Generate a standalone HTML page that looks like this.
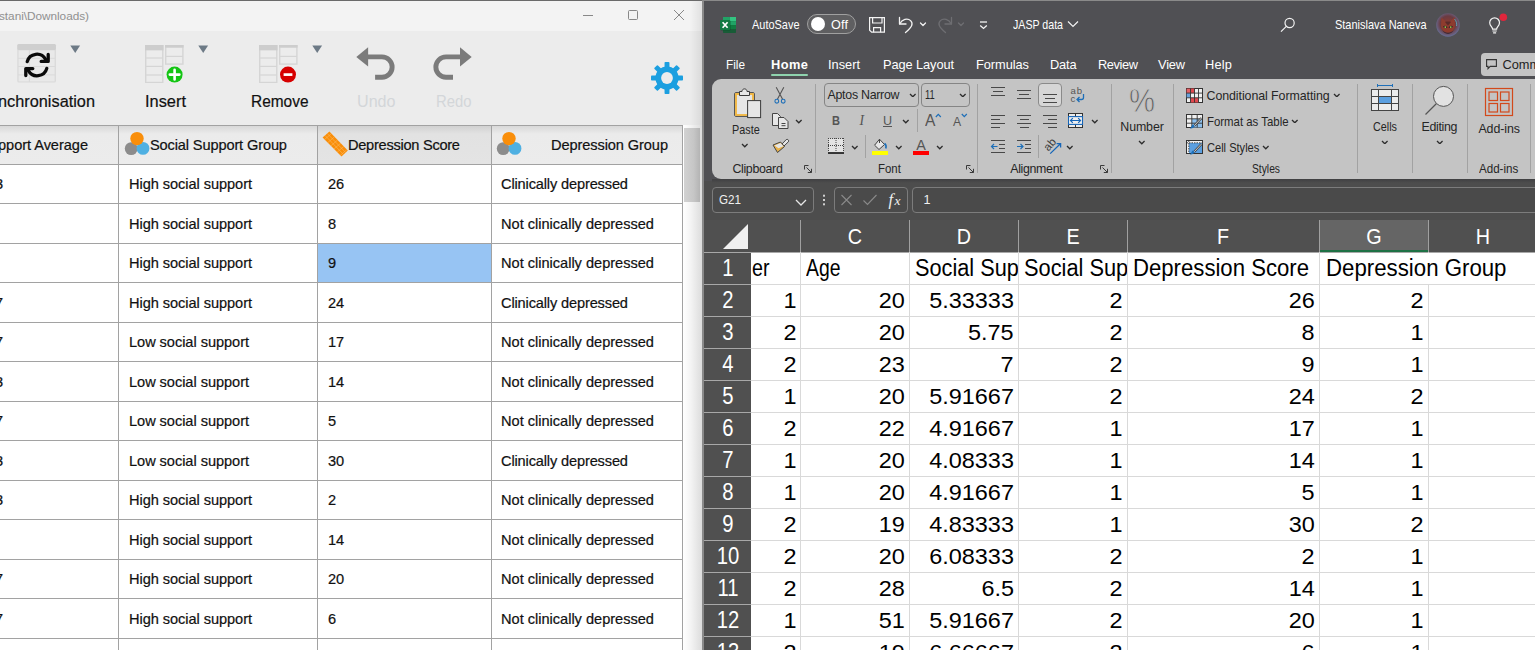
<!DOCTYPE html>
<html lang="en"><head><meta charset="utf-8"><title>JASP data</title>
<style>
html,body{margin:0;padding:0;}
body{width:1535px;height:650px;overflow:hidden;position:relative;background:#505054;font-family:"Liberation Sans",sans-serif;}
div,span.t,svg{position:absolute;}
span.t{white-space:pre;transform-origin:0 0;}
div{box-sizing:border-box;}
</style></head>
<body>
<div style="left:0px;top:0px;width:704px;height:650px;background:#f3f3f3;"></div>
<div style="left:0px;top:0px;width:704px;height:1px;background:#6a6a6a;"></div>
<div style="left:0px;top:1px;width:702px;height:30px;background:#f3f3f3;"></div>
<span class="t" style="left:-1px;top:9px;font-size:11.8px;line-height:14px;color:#909090;letter-spacing:-0.033px;">stani\Downloads)</span>
<svg style="left:578px;top:5px" width="112" height="20" viewBox="0 0 112 20"><g fill="none" stroke="#7c7c7c" stroke-width="0.9"><path d="M5 10.5H15"/><rect x="50.5" y="5.5" width="9" height="9" rx="1"/><path d="M96 5L106 15M106 5L96 15"/></g></svg>
<div style="left:0px;top:31px;width:702px;height:94px;background:#ececec;"></div>
<div style="left:0px;top:125px;width:684px;height:39px;background:linear-gradient(#d6d6d6,#ebebeb 9px,#ececec);"></div>
<div style="left:318px;top:125px;width:173px;height:39px;background:linear-gradient(#cfcfcf,#e2e2e2 9px,#e4e4e4);"></div>
<div style="left:0px;top:164px;width:684px;height:486px;background:#ffffff;"></div>
<div style="left:318px;top:244px;width:173px;height:38px;background:#97c4f3;"></div>
<div style="left:0px;top:125px;width:683px;height:1px;background:#a2a2a2;"></div>
<div style="left:0px;top:164px;width:683px;height:1px;background:#a2a2a2;"></div>
<div style="left:0px;top:203px;width:683px;height:1px;background:#a2a2a2;"></div>
<div style="left:0px;top:243px;width:683px;height:1px;background:#a2a2a2;"></div>
<div style="left:0px;top:282px;width:683px;height:1px;background:#a2a2a2;"></div>
<div style="left:0px;top:322px;width:683px;height:1px;background:#a2a2a2;"></div>
<div style="left:0px;top:361px;width:683px;height:1px;background:#a2a2a2;"></div>
<div style="left:0px;top:401px;width:683px;height:1px;background:#a2a2a2;"></div>
<div style="left:0px;top:440px;width:683px;height:1px;background:#a2a2a2;"></div>
<div style="left:0px;top:480px;width:683px;height:1px;background:#a2a2a2;"></div>
<div style="left:0px;top:519px;width:683px;height:1px;background:#a2a2a2;"></div>
<div style="left:0px;top:559px;width:683px;height:1px;background:#a2a2a2;"></div>
<div style="left:0px;top:598px;width:683px;height:1px;background:#a2a2a2;"></div>
<div style="left:0px;top:638px;width:683px;height:1px;background:#a2a2a2;"></div>
<div style="left:118px;top:125px;width:1px;height:525px;background:#a2a2a2;"></div>
<div style="left:317px;top:125px;width:1px;height:525px;background:#a2a2a2;"></div>
<div style="left:491px;top:125px;width:1px;height:525px;background:#a2a2a2;"></div>
<div style="left:682px;top:125px;width:1px;height:525px;background:#a2a2a2;"></div>
<div style="left:683px;top:125px;width:19px;height:525px;background:linear-gradient(90deg,#ffffff,#f4f4f4 40%,#dcdcdc);"></div>
<div style="left:684px;top:128px;width:16px;height:74px;background:linear-gradient(90deg,#d2d2d2,#c6c6c6 60%,#b4b4b4);"></div>
<div style="left:690px;top:1px;width:12px;height:124px;background:linear-gradient(90deg,rgba(0,0,0,0),rgba(0,0,0,0.08));"></div>
<div style="left:702px;top:0px;width:2px;height:650px;background:#8a8a8a;"></div>
<span class="t" style="left:-2px;top:91px;font-size:17.4px;line-height:20px;color:#111;transform:scaleX(0.9376);-webkit-text-stroke:0.2px #111;">nchronisation</span>
<span class="t" style="left:145px;top:91px;font-size:17.4px;line-height:20px;color:#111;transform:scaleX(0.9425);-webkit-text-stroke:0.2px #111;">Insert</span>
<span class="t" style="left:250.5px;top:91px;font-size:17.4px;line-height:20px;color:#111;transform:scaleX(0.8878);-webkit-text-stroke:0.2px #111;">Remove</span>
<span class="t" style="left:356.5px;top:91px;font-size:17.4px;line-height:20px;color:#d3d6d9;transform:scaleX(0.9260);">Undo</span>
<span class="t" style="left:435.5px;top:91px;font-size:17.4px;line-height:20px;color:#d3d6d9;transform:scaleX(0.8538);">Redo</span>
<span class="t" style="left:-2px;top:137px;font-size:14.6px;line-height:16px;color:#111;letter-spacing:-0.051px;-webkit-text-stroke:0.2px #111;">pport Average</span>
<span class="t" style="left:150px;top:137px;font-size:14.6px;line-height:16px;color:#111;letter-spacing:-0.134px;-webkit-text-stroke:0.2px #111;">Social Support Group</span>
<span class="t" style="left:348px;top:137px;font-size:14.6px;line-height:16px;color:#111;letter-spacing:-0.267px;-webkit-text-stroke:0.2px #111;">Depression Score</span>
<span class="t" style="left:551px;top:137px;font-size:14.6px;line-height:16px;color:#111;letter-spacing:-0.096px;-webkit-text-stroke:0.2px #111;">Depression Group</span>
<span class="t" style="left:129px;top:176px;font-size:14.6px;line-height:16px;color:#111;letter-spacing:-0.062px;-webkit-text-stroke:0.2px #111;">High social support</span>
<span class="t" style="left:328px;top:176px;font-size:14.6px;line-height:16px;color:#111;-webkit-text-stroke:0.2px #111;">26</span>
<span class="t" style="left:501px;top:176px;font-size:14.6px;line-height:16px;color:#111;letter-spacing:-0.147px;-webkit-text-stroke:0.2px #111;">Clinically depressed</span>
<span class="t" style="left:-5px;top:176px;font-size:14.6px;line-height:16px;color:#111;-webkit-text-stroke:0.2px #111;">3</span>
<span class="t" style="left:129px;top:216px;font-size:14.6px;line-height:16px;color:#111;letter-spacing:-0.062px;-webkit-text-stroke:0.2px #111;">High social support</span>
<span class="t" style="left:328px;top:216px;font-size:14.6px;line-height:16px;color:#111;-webkit-text-stroke:0.2px #111;">8</span>
<span class="t" style="left:501px;top:216px;font-size:14.6px;line-height:16px;color:#111;letter-spacing:-0.014px;-webkit-text-stroke:0.2px #111;">Not clinically depressed</span>
<span class="t" style="left:129px;top:255px;font-size:14.6px;line-height:16px;color:#111;letter-spacing:-0.062px;-webkit-text-stroke:0.2px #111;">High social support</span>
<span class="t" style="left:328px;top:255px;font-size:14.6px;line-height:16px;color:#111;-webkit-text-stroke:0.2px #111;">9</span>
<span class="t" style="left:501px;top:255px;font-size:14.6px;line-height:16px;color:#111;letter-spacing:-0.014px;-webkit-text-stroke:0.2px #111;">Not clinically depressed</span>
<span class="t" style="left:129px;top:295px;font-size:14.6px;line-height:16px;color:#111;letter-spacing:-0.062px;-webkit-text-stroke:0.2px #111;">High social support</span>
<span class="t" style="left:328px;top:295px;font-size:14.6px;line-height:16px;color:#111;-webkit-text-stroke:0.2px #111;">24</span>
<span class="t" style="left:501px;top:295px;font-size:14.6px;line-height:16px;color:#111;letter-spacing:-0.147px;-webkit-text-stroke:0.2px #111;">Clinically depressed</span>
<span class="t" style="left:-5px;top:295px;font-size:14.6px;line-height:16px;color:#111;-webkit-text-stroke:0.2px #111;">7</span>
<span class="t" style="left:129px;top:334px;font-size:14.6px;line-height:16px;color:#111;letter-spacing:-0.051px;-webkit-text-stroke:0.2px #111;">Low social support</span>
<span class="t" style="left:328px;top:334px;font-size:14.6px;line-height:16px;color:#111;-webkit-text-stroke:0.2px #111;">17</span>
<span class="t" style="left:501px;top:334px;font-size:14.6px;line-height:16px;color:#111;letter-spacing:-0.014px;-webkit-text-stroke:0.2px #111;">Not clinically depressed</span>
<span class="t" style="left:-5px;top:334px;font-size:14.6px;line-height:16px;color:#111;-webkit-text-stroke:0.2px #111;">7</span>
<span class="t" style="left:129px;top:374px;font-size:14.6px;line-height:16px;color:#111;letter-spacing:-0.051px;-webkit-text-stroke:0.2px #111;">Low social support</span>
<span class="t" style="left:328px;top:374px;font-size:14.6px;line-height:16px;color:#111;-webkit-text-stroke:0.2px #111;">14</span>
<span class="t" style="left:501px;top:374px;font-size:14.6px;line-height:16px;color:#111;letter-spacing:-0.014px;-webkit-text-stroke:0.2px #111;">Not clinically depressed</span>
<span class="t" style="left:-5px;top:374px;font-size:14.6px;line-height:16px;color:#111;-webkit-text-stroke:0.2px #111;">3</span>
<span class="t" style="left:129px;top:413px;font-size:14.6px;line-height:16px;color:#111;letter-spacing:-0.051px;-webkit-text-stroke:0.2px #111;">Low social support</span>
<span class="t" style="left:328px;top:413px;font-size:14.6px;line-height:16px;color:#111;-webkit-text-stroke:0.2px #111;">5</span>
<span class="t" style="left:501px;top:413px;font-size:14.6px;line-height:16px;color:#111;letter-spacing:-0.014px;-webkit-text-stroke:0.2px #111;">Not clinically depressed</span>
<span class="t" style="left:-5px;top:413px;font-size:14.6px;line-height:16px;color:#111;-webkit-text-stroke:0.2px #111;">7</span>
<span class="t" style="left:129px;top:453px;font-size:14.6px;line-height:16px;color:#111;letter-spacing:-0.051px;-webkit-text-stroke:0.2px #111;">Low social support</span>
<span class="t" style="left:328px;top:453px;font-size:14.6px;line-height:16px;color:#111;-webkit-text-stroke:0.2px #111;">30</span>
<span class="t" style="left:501px;top:453px;font-size:14.6px;line-height:16px;color:#111;letter-spacing:-0.147px;-webkit-text-stroke:0.2px #111;">Clinically depressed</span>
<span class="t" style="left:-5px;top:453px;font-size:14.6px;line-height:16px;color:#111;-webkit-text-stroke:0.2px #111;">3</span>
<span class="t" style="left:129px;top:492px;font-size:14.6px;line-height:16px;color:#111;letter-spacing:-0.062px;-webkit-text-stroke:0.2px #111;">High social support</span>
<span class="t" style="left:328px;top:492px;font-size:14.6px;line-height:16px;color:#111;-webkit-text-stroke:0.2px #111;">2</span>
<span class="t" style="left:501px;top:492px;font-size:14.6px;line-height:16px;color:#111;letter-spacing:-0.014px;-webkit-text-stroke:0.2px #111;">Not clinically depressed</span>
<span class="t" style="left:-5px;top:492px;font-size:14.6px;line-height:16px;color:#111;-webkit-text-stroke:0.2px #111;">3</span>
<span class="t" style="left:129px;top:532px;font-size:14.6px;line-height:16px;color:#111;letter-spacing:-0.062px;-webkit-text-stroke:0.2px #111;">High social support</span>
<span class="t" style="left:328px;top:532px;font-size:14.6px;line-height:16px;color:#111;-webkit-text-stroke:0.2px #111;">14</span>
<span class="t" style="left:501px;top:532px;font-size:14.6px;line-height:16px;color:#111;letter-spacing:-0.014px;-webkit-text-stroke:0.2px #111;">Not clinically depressed</span>
<span class="t" style="left:129px;top:571px;font-size:14.6px;line-height:16px;color:#111;letter-spacing:-0.062px;-webkit-text-stroke:0.2px #111;">High social support</span>
<span class="t" style="left:328px;top:571px;font-size:14.6px;line-height:16px;color:#111;-webkit-text-stroke:0.2px #111;">20</span>
<span class="t" style="left:501px;top:571px;font-size:14.6px;line-height:16px;color:#111;letter-spacing:-0.014px;-webkit-text-stroke:0.2px #111;">Not clinically depressed</span>
<span class="t" style="left:-5px;top:571px;font-size:14.6px;line-height:16px;color:#111;-webkit-text-stroke:0.2px #111;">7</span>
<span class="t" style="left:129px;top:611px;font-size:14.6px;line-height:16px;color:#111;letter-spacing:-0.062px;-webkit-text-stroke:0.2px #111;">High social support</span>
<span class="t" style="left:328px;top:611px;font-size:14.6px;line-height:16px;color:#111;-webkit-text-stroke:0.2px #111;">6</span>
<span class="t" style="left:501px;top:611px;font-size:14.6px;line-height:16px;color:#111;letter-spacing:-0.014px;-webkit-text-stroke:0.2px #111;">Not clinically depressed</span>
<span class="t" style="left:-5px;top:611px;font-size:14.6px;line-height:16px;color:#111;-webkit-text-stroke:0.2px #111;">7</span>
<div style="left:704px;top:0px;width:831px;height:220px;background:#505054;"></div>
<div style="left:704px;top:0px;width:831px;height:1px;background:#8a8a8a;"></div>
<div style="left:712px;top:79px;width:830px;height:100px;background:#c4c4c4;border-radius:0 0 0 9px;border-top-left-radius:9px;"></div>
<div style="left:704px;top:181px;width:831px;height:39px;background:#4d4d4d;"></div>
<div style="left:712px;top:179px;width:823px;height:4px;background:linear-gradient(#404042,#4d4d4d);"></div>
<div style="left:712px;top:187px;width:102px;height:26px;background:#4a4a4a;border:1px solid #7c7c7c;border-radius:4px;"></div>
<div style="left:834px;top:187px;width:74px;height:26px;background:#4a4a4a;border:1px solid #7c7c7c;border-radius:4px;"></div>
<div style="left:912px;top:187px;width:640px;height:26px;background:#4a4a4a;border:1px solid #7c7c7c;border-radius:4px;"></div>
<div style="left:704px;top:220px;width:831px;height:32px;background:#505050;"></div>
<div style="left:1319px;top:220px;width:109px;height:32px;background:#656565;"></div>
<div style="left:1319px;top:250px;width:109px;height:2px;background:#1e7145;"></div>
<div style="left:704px;top:252px;width:47px;height:398px;background:#505050;"></div>
<div style="left:751px;top:253px;width:784px;height:397px;background:#ffffff;"></div>
<div style="left:704px;top:252px;width:831px;height:1px;background:#a8a8a8;"></div>
<div style="left:800px;top:252px;width:1px;height:398px;background:#d9d9d9;"></div>
<div style="left:800px;top:220px;width:1px;height:32px;background:#a0a0a0;"></div>
<div style="left:909px;top:252px;width:1px;height:398px;background:#d9d9d9;"></div>
<div style="left:909px;top:220px;width:1px;height:32px;background:#a0a0a0;"></div>
<div style="left:1018px;top:252px;width:1px;height:398px;background:#d9d9d9;"></div>
<div style="left:1018px;top:220px;width:1px;height:32px;background:#a0a0a0;"></div>
<div style="left:1127px;top:252px;width:1px;height:398px;background:#d9d9d9;"></div>
<div style="left:1127px;top:220px;width:1px;height:32px;background:#a0a0a0;"></div>
<div style="left:1319px;top:252px;width:1px;height:398px;background:#d9d9d9;"></div>
<div style="left:1319px;top:220px;width:1px;height:32px;background:#a0a0a0;"></div>
<div style="left:1428px;top:252px;width:1px;height:398px;background:#d9d9d9;"></div>
<div style="left:1428px;top:220px;width:1px;height:32px;background:#a0a0a0;"></div>
<div style="left:751px;top:284px;width:784px;height:1px;background:#d9d9d9;"></div>
<div style="left:704px;top:284px;width:47px;height:1px;background:#a8a8a8;"></div>
<div style="left:751px;top:316px;width:784px;height:1px;background:#d9d9d9;"></div>
<div style="left:704px;top:316px;width:47px;height:1px;background:#a8a8a8;"></div>
<div style="left:751px;top:348px;width:784px;height:1px;background:#d9d9d9;"></div>
<div style="left:704px;top:348px;width:47px;height:1px;background:#a8a8a8;"></div>
<div style="left:751px;top:380px;width:784px;height:1px;background:#d9d9d9;"></div>
<div style="left:704px;top:380px;width:47px;height:1px;background:#a8a8a8;"></div>
<div style="left:751px;top:412px;width:784px;height:1px;background:#d9d9d9;"></div>
<div style="left:704px;top:412px;width:47px;height:1px;background:#a8a8a8;"></div>
<div style="left:751px;top:444px;width:784px;height:1px;background:#d9d9d9;"></div>
<div style="left:704px;top:444px;width:47px;height:1px;background:#a8a8a8;"></div>
<div style="left:751px;top:476px;width:784px;height:1px;background:#d9d9d9;"></div>
<div style="left:704px;top:476px;width:47px;height:1px;background:#a8a8a8;"></div>
<div style="left:751px;top:508px;width:784px;height:1px;background:#d9d9d9;"></div>
<div style="left:704px;top:508px;width:47px;height:1px;background:#a8a8a8;"></div>
<div style="left:751px;top:540px;width:784px;height:1px;background:#d9d9d9;"></div>
<div style="left:704px;top:540px;width:47px;height:1px;background:#a8a8a8;"></div>
<div style="left:751px;top:572px;width:784px;height:1px;background:#d9d9d9;"></div>
<div style="left:704px;top:572px;width:47px;height:1px;background:#a8a8a8;"></div>
<div style="left:751px;top:604px;width:784px;height:1px;background:#d9d9d9;"></div>
<div style="left:704px;top:604px;width:47px;height:1px;background:#a8a8a8;"></div>
<div style="left:751px;top:636px;width:784px;height:1px;background:#d9d9d9;"></div>
<div style="left:704px;top:636px;width:47px;height:1px;background:#a8a8a8;"></div>
<div style="left:1428px;top:253px;width:1px;height:31px;background:#ffffff;"></div>
<svg style="left:720px;top:222px" width="30" height="30" viewBox="0 0 30 30"><path d="M28 2V27H3Z" fill="#f0f0f0"/></svg>
<span class="t" style="left:752px;top:255px;font-size:23px;line-height:26px;color:#000;transform:scaleX(0.8556);">er</span>
<span class="t" style="left:805.5px;top:255px;font-size:23px;line-height:26px;color:#000;transform:scaleX(0.8427);">Age</span>
<div style="left:909px;top:252px;width:109px;height:31px;overflow:hidden">
<span class="t" style="left:5.5px;top:3px;font-size:23px;line-height:26px;color:#000;transform:scaleX(0.9439);">Social Support Average</span>
</div>
<div style="left:1018px;top:252px;width:109px;height:31px;overflow:hidden">
<span class="t" style="left:5.5px;top:3px;font-size:23px;line-height:26px;color:#000;transform:scaleX(0.9481);">Social Support Group</span>
</div>
<span class="t" style="left:1133px;top:255px;font-size:23px;line-height:26px;color:#000;transform:scaleX(0.9627);">Depression Score</span>
<span class="t" style="left:1325.5px;top:255px;font-size:23px;line-height:26px;color:#000;transform:scaleX(0.9670);">Depression Group</span>
<span class="t" style="right:739px;top:288px;font-size:22.4px;line-height:25px;color:#000;transform-origin:100% 0;transform:scaleX(1.047);">1</span>
<span class="t" style="right:630.5px;top:288px;font-size:22.4px;line-height:25px;color:#000;transform-origin:100% 0;transform:scaleX(1.047);">20</span>
<span class="t" style="right:521.2px;top:288px;font-size:22.4px;line-height:25px;color:#000;transform-origin:100% 0;transform:scaleX(1.047);">5.33333</span>
<span class="t" style="right:412.20000000000005px;top:288px;font-size:22.4px;line-height:25px;color:#000;transform-origin:100% 0;transform:scaleX(1.047);">2</span>
<span class="t" style="right:220.20000000000005px;top:288px;font-size:22.4px;line-height:25px;color:#000;transform-origin:100% 0;transform:scaleX(1.047);">26</span>
<span class="t" style="right:111.5px;top:288px;font-size:22.4px;line-height:25px;color:#000;transform-origin:100% 0;transform:scaleX(1.047);">2</span>
<span class="t" style="right:739px;top:320px;font-size:22.4px;line-height:25px;color:#000;transform-origin:100% 0;transform:scaleX(1.047);">2</span>
<span class="t" style="right:630.5px;top:320px;font-size:22.4px;line-height:25px;color:#000;transform-origin:100% 0;transform:scaleX(1.047);">20</span>
<span class="t" style="right:521.2px;top:320px;font-size:22.4px;line-height:25px;color:#000;transform-origin:100% 0;transform:scaleX(1.047);">5.75</span>
<span class="t" style="right:412.20000000000005px;top:320px;font-size:22.4px;line-height:25px;color:#000;transform-origin:100% 0;transform:scaleX(1.047);">2</span>
<span class="t" style="right:220.20000000000005px;top:320px;font-size:22.4px;line-height:25px;color:#000;transform-origin:100% 0;transform:scaleX(1.047);">8</span>
<span class="t" style="right:111.5px;top:320px;font-size:22.4px;line-height:25px;color:#000;transform-origin:100% 0;transform:scaleX(1.047);">1</span>
<span class="t" style="right:739px;top:352px;font-size:22.4px;line-height:25px;color:#000;transform-origin:100% 0;transform:scaleX(1.047);">2</span>
<span class="t" style="right:630.5px;top:352px;font-size:22.4px;line-height:25px;color:#000;transform-origin:100% 0;transform:scaleX(1.047);">23</span>
<span class="t" style="right:521.2px;top:352px;font-size:22.4px;line-height:25px;color:#000;transform-origin:100% 0;transform:scaleX(1.047);">7</span>
<span class="t" style="right:412.20000000000005px;top:352px;font-size:22.4px;line-height:25px;color:#000;transform-origin:100% 0;transform:scaleX(1.047);">2</span>
<span class="t" style="right:220.20000000000005px;top:352px;font-size:22.4px;line-height:25px;color:#000;transform-origin:100% 0;transform:scaleX(1.047);">9</span>
<span class="t" style="right:111.5px;top:352px;font-size:22.4px;line-height:25px;color:#000;transform-origin:100% 0;transform:scaleX(1.047);">1</span>
<span class="t" style="right:739px;top:384px;font-size:22.4px;line-height:25px;color:#000;transform-origin:100% 0;transform:scaleX(1.047);">1</span>
<span class="t" style="right:630.5px;top:384px;font-size:22.4px;line-height:25px;color:#000;transform-origin:100% 0;transform:scaleX(1.047);">20</span>
<span class="t" style="right:521.2px;top:384px;font-size:22.4px;line-height:25px;color:#000;transform-origin:100% 0;transform:scaleX(1.047);">5.91667</span>
<span class="t" style="right:412.20000000000005px;top:384px;font-size:22.4px;line-height:25px;color:#000;transform-origin:100% 0;transform:scaleX(1.047);">2</span>
<span class="t" style="right:220.20000000000005px;top:384px;font-size:22.4px;line-height:25px;color:#000;transform-origin:100% 0;transform:scaleX(1.047);">24</span>
<span class="t" style="right:111.5px;top:384px;font-size:22.4px;line-height:25px;color:#000;transform-origin:100% 0;transform:scaleX(1.047);">2</span>
<span class="t" style="right:739px;top:416px;font-size:22.4px;line-height:25px;color:#000;transform-origin:100% 0;transform:scaleX(1.047);">2</span>
<span class="t" style="right:630.5px;top:416px;font-size:22.4px;line-height:25px;color:#000;transform-origin:100% 0;transform:scaleX(1.047);">22</span>
<span class="t" style="right:521.2px;top:416px;font-size:22.4px;line-height:25px;color:#000;transform-origin:100% 0;transform:scaleX(1.047);">4.91667</span>
<span class="t" style="right:412.20000000000005px;top:416px;font-size:22.4px;line-height:25px;color:#000;transform-origin:100% 0;transform:scaleX(1.047);">1</span>
<span class="t" style="right:220.20000000000005px;top:416px;font-size:22.4px;line-height:25px;color:#000;transform-origin:100% 0;transform:scaleX(1.047);">17</span>
<span class="t" style="right:111.5px;top:416px;font-size:22.4px;line-height:25px;color:#000;transform-origin:100% 0;transform:scaleX(1.047);">1</span>
<span class="t" style="right:739px;top:448px;font-size:22.4px;line-height:25px;color:#000;transform-origin:100% 0;transform:scaleX(1.047);">1</span>
<span class="t" style="right:630.5px;top:448px;font-size:22.4px;line-height:25px;color:#000;transform-origin:100% 0;transform:scaleX(1.047);">20</span>
<span class="t" style="right:521.2px;top:448px;font-size:22.4px;line-height:25px;color:#000;transform-origin:100% 0;transform:scaleX(1.047);">4.08333</span>
<span class="t" style="right:412.20000000000005px;top:448px;font-size:22.4px;line-height:25px;color:#000;transform-origin:100% 0;transform:scaleX(1.047);">1</span>
<span class="t" style="right:220.20000000000005px;top:448px;font-size:22.4px;line-height:25px;color:#000;transform-origin:100% 0;transform:scaleX(1.047);">14</span>
<span class="t" style="right:111.5px;top:448px;font-size:22.4px;line-height:25px;color:#000;transform-origin:100% 0;transform:scaleX(1.047);">1</span>
<span class="t" style="right:739px;top:480px;font-size:22.4px;line-height:25px;color:#000;transform-origin:100% 0;transform:scaleX(1.047);">1</span>
<span class="t" style="right:630.5px;top:480px;font-size:22.4px;line-height:25px;color:#000;transform-origin:100% 0;transform:scaleX(1.047);">20</span>
<span class="t" style="right:521.2px;top:480px;font-size:22.4px;line-height:25px;color:#000;transform-origin:100% 0;transform:scaleX(1.047);">4.91667</span>
<span class="t" style="right:412.20000000000005px;top:480px;font-size:22.4px;line-height:25px;color:#000;transform-origin:100% 0;transform:scaleX(1.047);">1</span>
<span class="t" style="right:220.20000000000005px;top:480px;font-size:22.4px;line-height:25px;color:#000;transform-origin:100% 0;transform:scaleX(1.047);">5</span>
<span class="t" style="right:111.5px;top:480px;font-size:22.4px;line-height:25px;color:#000;transform-origin:100% 0;transform:scaleX(1.047);">1</span>
<span class="t" style="right:739px;top:512px;font-size:22.4px;line-height:25px;color:#000;transform-origin:100% 0;transform:scaleX(1.047);">2</span>
<span class="t" style="right:630.5px;top:512px;font-size:22.4px;line-height:25px;color:#000;transform-origin:100% 0;transform:scaleX(1.047);">19</span>
<span class="t" style="right:521.2px;top:512px;font-size:22.4px;line-height:25px;color:#000;transform-origin:100% 0;transform:scaleX(1.047);">4.83333</span>
<span class="t" style="right:412.20000000000005px;top:512px;font-size:22.4px;line-height:25px;color:#000;transform-origin:100% 0;transform:scaleX(1.047);">1</span>
<span class="t" style="right:220.20000000000005px;top:512px;font-size:22.4px;line-height:25px;color:#000;transform-origin:100% 0;transform:scaleX(1.047);">30</span>
<span class="t" style="right:111.5px;top:512px;font-size:22.4px;line-height:25px;color:#000;transform-origin:100% 0;transform:scaleX(1.047);">2</span>
<span class="t" style="right:739px;top:544px;font-size:22.4px;line-height:25px;color:#000;transform-origin:100% 0;transform:scaleX(1.047);">2</span>
<span class="t" style="right:630.5px;top:544px;font-size:22.4px;line-height:25px;color:#000;transform-origin:100% 0;transform:scaleX(1.047);">20</span>
<span class="t" style="right:521.2px;top:544px;font-size:22.4px;line-height:25px;color:#000;transform-origin:100% 0;transform:scaleX(1.047);">6.08333</span>
<span class="t" style="right:412.20000000000005px;top:544px;font-size:22.4px;line-height:25px;color:#000;transform-origin:100% 0;transform:scaleX(1.047);">2</span>
<span class="t" style="right:220.20000000000005px;top:544px;font-size:22.4px;line-height:25px;color:#000;transform-origin:100% 0;transform:scaleX(1.047);">2</span>
<span class="t" style="right:111.5px;top:544px;font-size:22.4px;line-height:25px;color:#000;transform-origin:100% 0;transform:scaleX(1.047);">1</span>
<span class="t" style="right:739px;top:576px;font-size:22.4px;line-height:25px;color:#000;transform-origin:100% 0;transform:scaleX(1.047);">2</span>
<span class="t" style="right:630.5px;top:576px;font-size:22.4px;line-height:25px;color:#000;transform-origin:100% 0;transform:scaleX(1.047);">28</span>
<span class="t" style="right:521.2px;top:576px;font-size:22.4px;line-height:25px;color:#000;transform-origin:100% 0;transform:scaleX(1.047);">6.5</span>
<span class="t" style="right:412.20000000000005px;top:576px;font-size:22.4px;line-height:25px;color:#000;transform-origin:100% 0;transform:scaleX(1.047);">2</span>
<span class="t" style="right:220.20000000000005px;top:576px;font-size:22.4px;line-height:25px;color:#000;transform-origin:100% 0;transform:scaleX(1.047);">14</span>
<span class="t" style="right:111.5px;top:576px;font-size:22.4px;line-height:25px;color:#000;transform-origin:100% 0;transform:scaleX(1.047);">1</span>
<span class="t" style="right:739px;top:608px;font-size:22.4px;line-height:25px;color:#000;transform-origin:100% 0;transform:scaleX(1.047);">1</span>
<span class="t" style="right:630.5px;top:608px;font-size:22.4px;line-height:25px;color:#000;transform-origin:100% 0;transform:scaleX(1.047);">51</span>
<span class="t" style="right:521.2px;top:608px;font-size:22.4px;line-height:25px;color:#000;transform-origin:100% 0;transform:scaleX(1.047);">5.91667</span>
<span class="t" style="right:412.20000000000005px;top:608px;font-size:22.4px;line-height:25px;color:#000;transform-origin:100% 0;transform:scaleX(1.047);">2</span>
<span class="t" style="right:220.20000000000005px;top:608px;font-size:22.4px;line-height:25px;color:#000;transform-origin:100% 0;transform:scaleX(1.047);">20</span>
<span class="t" style="right:111.5px;top:608px;font-size:22.4px;line-height:25px;color:#000;transform-origin:100% 0;transform:scaleX(1.047);">1</span>
<span class="t" style="right:739px;top:640px;font-size:22.4px;line-height:25px;color:#000;transform-origin:100% 0;transform:scaleX(1.047);">2</span>
<span class="t" style="right:630.5px;top:640px;font-size:22.4px;line-height:25px;color:#000;transform-origin:100% 0;transform:scaleX(1.047);">19</span>
<span class="t" style="right:521.2px;top:640px;font-size:22.4px;line-height:25px;color:#000;transform-origin:100% 0;transform:scaleX(1.047);">6.66667</span>
<span class="t" style="right:412.20000000000005px;top:640px;font-size:22.4px;line-height:25px;color:#000;transform-origin:100% 0;transform:scaleX(1.047);">2</span>
<span class="t" style="right:220.20000000000005px;top:640px;font-size:22.4px;line-height:25px;color:#000;transform-origin:100% 0;transform:scaleX(1.047);">6</span>
<span class="t" style="right:111.5px;top:640px;font-size:22.4px;line-height:25px;color:#000;transform-origin:100% 0;transform:scaleX(1.047);">1</span>
<span class="t" style="left:728px;top:255px;font-size:23px;line-height:26px;color:#ffffff;transform-origin:50% 0;transform:translateX(-50%) scaleX(0.88);">1</span>
<span class="t" style="left:728px;top:287px;font-size:23px;line-height:26px;color:#ffffff;transform-origin:50% 0;transform:translateX(-50%) scaleX(0.88);">2</span>
<span class="t" style="left:728px;top:319px;font-size:23px;line-height:26px;color:#ffffff;transform-origin:50% 0;transform:translateX(-50%) scaleX(0.88);">3</span>
<span class="t" style="left:728px;top:351px;font-size:23px;line-height:26px;color:#ffffff;transform-origin:50% 0;transform:translateX(-50%) scaleX(0.88);">4</span>
<span class="t" style="left:728px;top:383px;font-size:23px;line-height:26px;color:#ffffff;transform-origin:50% 0;transform:translateX(-50%) scaleX(0.88);">5</span>
<span class="t" style="left:728px;top:415px;font-size:23px;line-height:26px;color:#ffffff;transform-origin:50% 0;transform:translateX(-50%) scaleX(0.88);">6</span>
<span class="t" style="left:728px;top:447px;font-size:23px;line-height:26px;color:#ffffff;transform-origin:50% 0;transform:translateX(-50%) scaleX(0.88);">7</span>
<span class="t" style="left:728px;top:479px;font-size:23px;line-height:26px;color:#ffffff;transform-origin:50% 0;transform:translateX(-50%) scaleX(0.88);">8</span>
<span class="t" style="left:728px;top:511px;font-size:23px;line-height:26px;color:#ffffff;transform-origin:50% 0;transform:translateX(-50%) scaleX(0.88);">9</span>
<span class="t" style="left:728px;top:543px;font-size:23px;line-height:26px;color:#ffffff;transform-origin:50% 0;transform:translateX(-50%) scaleX(0.88);">10</span>
<span class="t" style="left:728px;top:575px;font-size:23px;line-height:26px;color:#ffffff;transform-origin:50% 0;transform:translateX(-50%) scaleX(0.88);">11</span>
<span class="t" style="left:728px;top:607px;font-size:23px;line-height:26px;color:#ffffff;transform-origin:50% 0;transform:translateX(-50%) scaleX(0.88);">12</span>
<span class="t" style="left:728px;top:639px;font-size:23px;line-height:26px;color:#ffffff;transform-origin:50% 0;transform:translateX(-50%) scaleX(0.88);">13</span>
<span class="t" style="left:854.5px;top:225px;font-size:21.5px;line-height:24px;color:#ffffff;transform-origin:50% 0;transform:translateX(-50%) scaleX(0.92);">C</span>
<span class="t" style="left:963.5px;top:225px;font-size:21.5px;line-height:24px;color:#ffffff;transform-origin:50% 0;transform:translateX(-50%) scaleX(0.92);">D</span>
<span class="t" style="left:1072.5px;top:225px;font-size:21.5px;line-height:24px;color:#ffffff;transform-origin:50% 0;transform:translateX(-50%) scaleX(0.92);">E</span>
<span class="t" style="left:1223px;top:225px;font-size:21.5px;line-height:24px;color:#ffffff;transform-origin:50% 0;transform:translateX(-50%) scaleX(0.92);">F</span>
<span class="t" style="left:1373.5px;top:225px;font-size:21.5px;line-height:24px;color:#ffffff;transform-origin:50% 0;transform:translateX(-50%) scaleX(0.92);">G</span>
<span class="t" style="left:1483px;top:225px;font-size:21.5px;line-height:24px;color:#ffffff;transform-origin:50% 0;transform:translateX(-50%) scaleX(0.92);">H</span>
<svg style="left:719px;top:16px" width="18" height="18" viewBox="719 16 18 18"><rect x="723" y="17" width="13" height="16" rx="0.8" fill="#185c37"/><rect x="723" y="17" width="6.6" height="4.2" fill="#21a366"/><rect x="729.6" y="17" width="6.4" height="4.2" fill="#33c481"/><rect x="723" y="21.2" width="6.6" height="3.9" fill="#107c41"/><rect x="729.6" y="21.2" width="6.4" height="3.9" fill="#21a366"/><rect x="723" y="25.1" width="6.6" height="3.9" fill="#0e6b38"/><rect x="729.6" y="25.1" width="6.4" height="3.9" fill="#107c41"/><rect x="720.6" y="20.6" width="10" height="10" rx="0.8" fill="#0a4f2a" opacity="0.55"/><rect x="720" y="20" width="10" height="10" rx="0.8" fill="#117a41"/><path d="M722.6 22.3L727.6 27.8M727.6 22.3L722.6 27.8" stroke="#fff" stroke-width="1.7" fill="none"/></svg>
<span class="t" style="left:752px;top:18px;font-size:12.6px;line-height:14px;color:#ffffff;transform:scaleX(0.8696);">AutoSave</span>
<div style="left:807px;top:14px;width:49px;height:20px;background:#5f5f61;border:1px solid #a0a0a0;border-radius:10px;"></div>
<div style="left:811px;top:17px;width:14px;height:14px;background:#ffffff;border-radius:7px;"></div>
<span class="t" style="left:831px;top:18px;font-size:12.6px;line-height:14px;color:#ffffff;letter-spacing:0.211px;">Off</span>
<svg style="left:868px;top:16px" width="18" height="18" viewBox="868 16 18 18"><g fill="none" stroke="#f4f4f4" stroke-width="1.2"><path d="M869.6 17.6H884.4V32.2H871.6L869.6 30.2Z"/><path d="M872.6 17.6V23H882V17.6"/><path d="M873.6 32.2V27.6H880.6V32.2"/></g></svg>
<svg style="left:896px;top:14px" width="34" height="22" viewBox="0 0 34 22"><g fill="none" stroke="#f2f2f2" stroke-width="1.3" stroke-linecap="round" stroke-linejoin="round"><path d="M3.5 3.5V10H10"/><path d="M3.8 9.8C6 5.2 11.5 3.6 14.6 6.6C17.4 9.4 16.4 12.6 9.5 18.5"/><path d="M24.5 9L27 11.5L29.5 9"/></g></svg>
<svg style="left:936px;top:14px" width="34" height="22" viewBox="0 0 34 22"><g fill="none" stroke="#6e6e72" stroke-width="1.3" stroke-linecap="round" stroke-linejoin="round"><path d="M15.5 3.5V10H9"/><path d="M15.2 9.8C13 5.2 7.5 3.6 4.4 6.6C1.6 9.4 2.6 12.6 9.5 18.5"/><path d="M22.5 9L25 11.5L27.5 9"/></g></svg>
<svg style="left:977px;top:19px" width="13" height="12" viewBox="0 0 13 12"><g fill="none" stroke="#f4f4f4" stroke-width="1.3"><path d="M3 3H10"/><path d="M3.2 6.4L6.5 9.4L9.8 6.4"/></g></svg>
<span class="t" style="left:1013px;top:18px;font-size:12.6px;line-height:14px;color:#ffffff;transform:scaleX(0.8434);">JASP data</span>
<svg style="left:1066px;top:19px" width="14" height="10" viewBox="0 0 14 10"><path d="M2 2.5L7 7.5L12 2.5" fill="none" stroke="#f2f2f2" stroke-width="1.2"/></svg>
<svg style="left:1279px;top:16px" width="18" height="18" viewBox="0 0 18 18"><g fill="none" stroke="#f2f2f2" stroke-width="1.2"><circle cx="10.6" cy="7" r="4.6"/><path d="M7.3 10.4L2 15.6"/></g></svg>
<span class="t" style="left:1335px;top:18px;font-size:12.2px;line-height:14px;color:#ffffff;transform:scaleX(0.9004);">Stanislava Naneva</span>
<svg style="left:1436px;top:13px" width="24" height="24" viewBox="0 0 24 24"><defs><radialGradient id="av" cx="50%" cy="45%" r="55%"><stop offset="0" stop-color="#8e3b30"/><stop offset="0.6" stop-color="#6b3b42"/><stop offset="1" stop-color="#666f98"/></radialGradient></defs><circle cx="12" cy="12" r="11.8" fill="url(#av)"/><path d="M5.5 4.5L10 8.5H14L18.5 4L19 12C19 17 15.5 20.5 12 20.5C8.5 20.5 5 17 5 12Z" fill="#8e3c2e"/><path d="M9 9L12 12.500L15 9L14 8.5H10Z" fill="#5a2a2a"/><path d="M7 13.5C9 12 10.5 13 11.5 14.5C10 15.5 8 15.2 7 13.5ZM17 13.5C15 12 13.5 13 12.5 14.5C14 15.500 16 15.2 17 13.500Z" fill="#33222a"/><path d="M6 16C8 21 16 21 18 16C16 22.5 8 22.500 6 16Z" fill="#3a2a3a"/><circle cx="9.300" cy="14.1" r="0.9" fill="#9bd04a"/><circle cx="14.7" cy="14.100" r="0.9" fill="#9bd04a"/><path d="M18.5 6C20.5 8 21 11 20.5 13" stroke="#58c3d8" stroke-width="1" fill="none" opacity="0.7"/></svg>
<svg style="left:1484px;top:10px" width="26" height="26" viewBox="1484 10 26 26"><g fill="none" stroke="#f4f4f4" stroke-width="1.2"><path d="M1492.600 29.2C1492.600 27.2 1489.700 25.9 1489.700 22.7A4.9 4.900 0 0 1 1499.500 22.700C1499.500 25.900 1496.600 27.200 1496.600 29.200Z"/><path d="M1492.400 31H1496.800M1493.100 32.900H1496.100"/></g><circle cx="1503.300" cy="17.3" r="3.800" fill="#e0263c"/></svg>
<span class="t" style="left:726px;top:57px;font-size:12.8px;line-height:15px;color:#ffffff;transform:scaleX(0.9212);">File</span>
<span class="t" style="left:771px;top:57px;font-size:12.8px;line-height:15px;color:#ffffff;font-weight:700;letter-spacing:0.479px;">Home</span>
<div style="left:771px;top:74px;width:37px;height:2px;background:#8fd3ae;border-radius:1px;"></div>
<span class="t" style="left:828px;top:57px;font-size:12.8px;line-height:15px;color:#ffffff;">Insert</span>
<span class="t" style="left:883px;top:57px;font-size:12.8px;line-height:15px;color:#ffffff;letter-spacing:-0.087px;">Page Layout</span>
<span class="t" style="left:976px;top:57px;font-size:12.8px;line-height:15px;color:#ffffff;letter-spacing:-0.049px;">Formulas</span>
<span class="t" style="left:1050px;top:57px;font-size:12.8px;line-height:15px;color:#ffffff;letter-spacing:-0.177px;">Data</span>
<span class="t" style="left:1098px;top:57px;font-size:12.8px;line-height:15px;color:#ffffff;letter-spacing:-0.394px;">Review</span>
<span class="t" style="left:1158px;top:57px;font-size:12.8px;line-height:15px;color:#ffffff;letter-spacing:-0.172px;">View</span>
<span class="t" style="left:1205px;top:57px;font-size:12.8px;line-height:15px;color:#ffffff;letter-spacing:0.224px;">Help</span>
<div style="left:1481px;top:53px;width:60px;height:23px;background:#c4c4c4;border-radius:4px;"></div>
<svg style="left:1485px;top:57px" width="14" height="14" viewBox="0 0 14 14"><path d="M1.6 2.6H11.4V9.4H5.2L3 11.6V9.4H1.6Z" fill="none" stroke="#333" stroke-width="1.1"/></svg>
<span class="t" style="left:1502.5px;top:57px;font-size:12.8px;line-height:15px;color:#222;">Comments</span>
<div style="left:815px;top:84px;width:1px;height:89px;background:#a2a2a2;"></div>
<div style="left:977px;top:84px;width:1px;height:89px;background:#a2a2a2;"></div>
<div style="left:1111px;top:84px;width:1px;height:89px;background:#a2a2a2;"></div>
<div style="left:1173px;top:84px;width:1px;height:89px;background:#a2a2a2;"></div>
<div style="left:1357px;top:84px;width:1px;height:89px;background:#a2a2a2;"></div>
<div style="left:1412px;top:84px;width:1px;height:89px;background:#a2a2a2;"></div>
<div style="left:1467px;top:84px;width:1px;height:89px;background:#a2a2a2;"></div>
<div style="left:1530px;top:84px;width:1px;height:89px;background:#a2a2a2;"></div>
<svg style="left:731px;top:85px" width="34" height="36" viewBox="0 0 34 36"><rect x="3.7" y="7.7" width="19.6" height="23.6" rx="1" fill="#e6e6e6" stroke="#3a3a3a" stroke-width="1"/><rect x="5" y="9" width="17" height="21" fill="none" stroke="#f2b63c" stroke-width="1.8"/><path d="M8.5 10.5V6.5H11C11 3 16 3 16 6.5H18.5V10.5Z" fill="#e6e6e6" stroke="#3a3a3a" stroke-width="1"/><rect x="16.6" y="15.6" width="13" height="17" fill="#e6e6e6" stroke="#3a3a3a" stroke-width="1"/></svg>
<span class="t" style="left:731.6px;top:123px;font-size:12.4px;line-height:14px;color:#262626;transform:scaleX(0.8742);">Paste</span>
<svg style="left:740.5px;top:143px" width="7.6" height="4.8" viewBox="-1 -1 7.6 4.8"><path d="M0 0L2.8 2.8L5.6 0" fill="none" stroke="#2c2c2c" stroke-width="1.3"/></svg>
<svg style="left:773px;top:86px" width="14" height="19" viewBox="0 0 14 19"><g fill="none" stroke-width="1.1"><path d="M3.2 1.2L9.6 13.2M10.8 1.2L4.4 13.2" stroke="#555"/><circle cx="3.8" cy="15.2" r="1.9" stroke="#1e6fb8"/><circle cx="10.2" cy="15.2" r="1.9" stroke="#1e6fb8"/></g></svg>
<svg style="left:771px;top:112px" width="19" height="18" viewBox="0 0 19 18"><g fill="#e6e6e6" stroke="#444" stroke-width="1"><path d="M1.5 1.5H6.5L9.5 4.5V13.5H1.5Z"/><path d="M7.5 5.5H13L17 9.5V16.5H7.5Z"/><path d="M10.5 11.5H14.5M10.5 13.7H14.5" fill="none"/></g></svg>
<svg style="left:795px;top:119px" width="7.6" height="4.8" viewBox="-1 -1 7.6 4.8"><path d="M0 0L2.8 2.8L5.6 0" fill="none" stroke="#2c2c2c" stroke-width="1.3"/></svg>
<svg style="left:772px;top:138px" width="18" height="16" viewBox="0 0 18 16"><g stroke="#444" stroke-width="1"><path d="M10 6L14.2 1.6A1.6 1.6 0 0 1 16.4 3.8L12 8Z" fill="#e6e6e6"/><path d="M1 7L8.5 4L12.5 8.5L5.5 14.5Z" fill="#e9b24a"/><path d="M2.5 7.5L8.5 5L11.5 8.2L6.5 10.2Z" fill="#e6e6e6" stroke="none"/></g></svg>
<span class="t" style="left:732.4px;top:162px;font-size:12.4px;line-height:14px;color:#262626;letter-spacing:-0.331px;">Clipboard</span>
<svg style="left:804px;top:164.5px" width="9" height="9" viewBox="0 0 9 9"><g fill="none" stroke="#3a3a3a" stroke-width="1"><path d="M0.5 4.5V0.5H4.5"/><path d="M2.500 2.500L7.400 7.400M7.500 3.800V7.500H3.800"/></g></svg>
<div style="left:824px;top:83px;width:95px;height:24px;border:1px solid #858585;border-radius:4px;"></div>
<div style="left:921px;top:83px;width:49px;height:24px;border:1px solid #858585;border-radius:4px;"></div>
<span class="t" style="left:827.5px;top:88px;font-size:12.4px;line-height:14px;color:#262626;letter-spacing:-0.278px;">Aptos Narrow</span>
<svg style="left:908.5px;top:92.7px" width="7.6" height="4.8" viewBox="-1 -1 7.6 4.8"><path d="M0 0L2.8 2.8L5.6 0" fill="none" stroke="#2c2c2c" stroke-width="1.3"/></svg>
<span class="t" style="left:925px;top:88px;font-size:12.4px;line-height:14px;color:#262626;transform:scaleX(0.7534);">11</span>
<svg style="left:959.3px;top:92.7px" width="7.6" height="4.8" viewBox="-1 -1 7.6 4.8"><path d="M0 0L2.8 2.8L5.6 0" fill="none" stroke="#2c2c2c" stroke-width="1.3"/></svg>
<span class="t" style="left:832.3px;top:113px;font-size:13.2px;line-height:15px;color:#555;font-weight:700;transform:scaleX(0.8393);">B</span>
<span class="t" style="left:859.5px;top:113px;font-size:13.6px;line-height:15px;color:#555;font-style:italic;font-family:'Liberation Serif',serif;">I</span>
<span class="t" style="left:883px;top:114px;font-size:12.6px;line-height:14px;color:#555;letter-spacing:-0.309px;">U</span>
<div style="left:883px;top:126px;width:9px;height:1px;background:#555;"></div>
<svg style="left:902.4px;top:119px" width="7.6" height="4.8" viewBox="-1 -1 7.6 4.8"><path d="M0 0L2.8 2.8L5.6 0" fill="none" stroke="#2c2c2c" stroke-width="1.3"/></svg>
<div style="left:917px;top:109px;width:1px;height:23px;background:#a2a2a2;"></div>
<span class="t" style="left:925px;top:111px;font-size:16.6px;line-height:19px;color:#555;transform:scaleX(0.9388);">A</span>
<svg style="left:935px;top:113px" width="7" height="5" viewBox="0 0 7 5"><path d="M0.8 4L3.3 1.3L5.8 4" fill="none" stroke="#1e6fb8" stroke-width="1.2"/></svg>
<span class="t" style="left:953px;top:115px;font-size:12.2px;line-height:14px;color:#555;letter-spacing:-0.141px;">A</span>
<svg style="left:961px;top:113px" width="7" height="5" viewBox="0 0 7 5"><path d="M0.8 1L3.3 3.7L5.8 1" fill="none" stroke="#1e6fb8" stroke-width="1.2"/></svg>
<svg style="left:828px;top:138px" width="16" height="17" viewBox="0 0 16 17"><rect x="0.5" y="0.5" width="15" height="14" fill="#e4e4e4"/><g stroke="#444" stroke-width="1" stroke-dasharray="1 1" fill="none"><path d="M0 0.5H16M0.5 0V14M15.5 0V14M8 0V14M0 7.5H16"/></g><path d="M0 15H16" stroke="#111" stroke-width="1.6"/></svg>
<svg style="left:850.5px;top:145px" width="7.6" height="4.8" viewBox="-1 -1 7.6 4.8"><path d="M0 0L2.8 2.8L5.6 0" fill="none" stroke="#2c2c2c" stroke-width="1.3"/></svg>
<div style="left:865px;top:135px;width:1px;height:23px;background:#a2a2a2;"></div>
<svg style="left:872px;top:138px" width="17" height="18" viewBox="0 0 17 18"><path d="M7.5 1.2L12.5 6.5L7 11.5L2.6 7.2Z" fill="#e6e6e6" stroke="#444" stroke-width="1"/><path d="M7.5 1.2V5" stroke="#444" fill="none"/><path d="M12.5 5.5C14 6.5 14.4 8.5 13.8 10.5" fill="none" stroke="#1e6fb8" stroke-width="1.6"/><rect x="0" y="13" width="16" height="4" fill="#ffff00"/></svg>
<svg style="left:894.5px;top:145px" width="7.6" height="4.8" viewBox="-1 -1 7.6 4.8"><path d="M0 0L2.8 2.8L5.6 0" fill="none" stroke="#2c2c2c" stroke-width="1.3"/></svg>
<span class="t" style="left:916.3px;top:137px;font-size:14.4px;line-height:16px;color:#555;letter-spacing:-0.109px;">A</span>
<div style="left:913px;top:151px;width:16px;height:4px;background:#ff0000;"></div>
<svg style="left:935.6px;top:145px" width="7.6" height="4.8" viewBox="-1 -1 7.6 4.8"><path d="M0 0L2.8 2.8L5.6 0" fill="none" stroke="#2c2c2c" stroke-width="1.3"/></svg>
<span class="t" style="left:877.7px;top:162px;font-size:12.4px;line-height:14px;color:#262626;transform:scaleX(0.9235);">Font</span>
<svg style="left:965.5px;top:164.5px" width="9" height="9" viewBox="0 0 9 9"><g fill="none" stroke="#3a3a3a" stroke-width="1"><path d="M0.5 4.5V0.5H4.5"/><path d="M2.500 2.500L7.400 7.400M7.500 3.800V7.500H3.800"/></g></svg>
<div style="left:1038px;top:83px;width:24px;height:24px;background:#d6d6d6;border:1px solid #8a8a8a;border-radius:4px;"></div>
<div style="left:991px;top:87px;width:14px;height:1px;background:#484848"></div><div style="left:993px;top:91px;width:10px;height:1px;background:#484848"></div><div style="left:991px;top:95px;width:14px;height:1px;background:#484848"></div>
<div style="left:1017px;top:90px;width:14px;height:1px;background:#484848"></div><div style="left:1019px;top:94px;width:10px;height:1px;background:#484848"></div><div style="left:1017px;top:98px;width:14px;height:1px;background:#484848"></div>
<div style="left:1043px;top:94px;width:14px;height:1px;background:#484848"></div><div style="left:1045px;top:98px;width:10px;height:1px;background:#484848"></div><div style="left:1043px;top:102px;width:14px;height:1px;background:#484848"></div>
<div style="left:991px;top:114.5px;width:14px;height:1px;background:#484848"></div><div style="left:991px;top:118.5px;width:9px;height:1px;background:#484848"></div><div style="left:991px;top:122.5px;width:14px;height:1px;background:#484848"></div><div style="left:991px;top:126.5px;width:9px;height:1px;background:#484848"></div>
<div style="left:1017px;top:114.5px;width:14px;height:1px;background:#484848"></div><div style="left:1019.5px;top:118.5px;width:9.0px;height:1px;background:#484848"></div><div style="left:1017px;top:122.5px;width:14px;height:1px;background:#484848"></div><div style="left:1019.5px;top:126.5px;width:9.0px;height:1px;background:#484848"></div>
<div style="left:1043px;top:114.5px;width:14px;height:1px;background:#484848"></div><div style="left:1048px;top:118.5px;width:9px;height:1px;background:#484848"></div><div style="left:1043px;top:122.5px;width:14px;height:1px;background:#484848"></div><div style="left:1048px;top:126.5px;width:9px;height:1px;background:#484848"></div>
<div style="left:991px;top:140px;width:14px;height:1px;background:#484848"></div><div style="left:999px;top:144px;width:6px;height:1px;background:#484848"></div><div style="left:999px;top:148px;width:6px;height:1px;background:#484848"></div><div style="left:991px;top:152px;width:14px;height:1px;background:#484848"></div>
<div style="left:1017px;top:140px;width:14px;height:1px;background:#484848"></div><div style="left:1025px;top:144px;width:6px;height:1px;background:#484848"></div><div style="left:1025px;top:148px;width:6px;height:1px;background:#484848"></div><div style="left:1017px;top:152px;width:14px;height:1px;background:#484848"></div>
<svg style="left:990px;top:142px" width="9" height="9" viewBox="0 0 9 9"><path d="M7.5 4.5H1.5M4 2L1.5 4.5L4 7" fill="none" stroke="#1e6fb8" stroke-width="1.2"/></svg>
<svg style="left:1016px;top:142px" width="9" height="9" viewBox="0 0 9 9"><path d="M1 4.5H7M4.5 2L7 4.5L4.5 7" fill="none" stroke="#1e6fb8" stroke-width="1.2"/></svg>
<span class="t" style="left:1070.5px;top:85px;font-size:9.6px;line-height:11px;color:#555;letter-spacing:0.828px;">ab</span>
<span class="t" style="left:1070.5px;top:93px;font-size:9.6px;line-height:11px;color:#555;">c</span>
<svg style="left:1075px;top:93px" width="11" height="11" viewBox="0 0 11 11"><path d="M8.5 1V4.5C8.5 6 7.5 6.5 6.5 6.5H2M4.5 4L2 6.5L4.5 9" fill="none" stroke="#1e6fb8" stroke-width="1.3"/></svg>
<svg style="left:1068px;top:113px" width="16" height="15" viewBox="0 0 16 15"><rect x="0.500" y="0.5" width="14" height="14" fill="#ececec" stroke="#333" stroke-width="1"/><path d="M7.500 0.500V3.500M7.500 11.500V14.500" stroke="#333" fill="none"/><rect x="0.500" y="3.600" width="14" height="7.800" fill="#efefef" stroke="#1565b8" stroke-width="1.100"/><path d="M2.600 7.500H12.400M4.800 5.200L2.500 7.500L4.800 9.800M10.200 5.200L12.500 7.500L10.200 9.800" fill="none" stroke="#1565b8" stroke-width="1.200"/></svg>
<svg style="left:1090.5px;top:119px" width="7.6" height="4.8" viewBox="-1 -1 7.6 4.8"><path d="M0 0L2.8 2.8L5.6 0" fill="none" stroke="#2c2c2c" stroke-width="1.3"/></svg>
<div style="left:1038px;top:135px;width:1px;height:23px;background:#a2a2a2;"></div>
<svg style="left:1040px;top:134px" width="26" height="24" viewBox="1040 134 26 24"><text transform="translate(1048.6 151.8) rotate(-50)" font-size="11.4" fill="#3c3c3c" font-family="Liberation Sans,sans-serif">ab</text><path d="M1050.2 153.600L1060.400 143.800M1056.600 143.700H1060.600V147.600" fill="none" stroke="#1565b8" stroke-width="1.300"/></svg>
<svg style="left:1065.5px;top:145px" width="7.6" height="4.8" viewBox="-1 -1 7.6 4.8"><path d="M0 0L2.8 2.8L5.6 0" fill="none" stroke="#2c2c2c" stroke-width="1.3"/></svg>
<span class="t" style="left:1010.2px;top:162px;font-size:12.4px;line-height:14px;color:#262626;letter-spacing:-0.326px;">Alignment</span>
<svg style="left:1100px;top:164.5px" width="9" height="9" viewBox="0 0 9 9"><g fill="none" stroke="#3a3a3a" stroke-width="1"><path d="M0.5 4.5V0.5H4.5"/><path d="M2.500 2.500L7.400 7.400M7.500 3.800V7.500H3.800"/></g></svg>
<span class="t" style="left:1128.5px;top:82px;font-size:33px;line-height:37px;color:#5a5a5a;transform:scaleX(0.8860);-webkit-text-stroke:0.9px #c4c4c4;">%</span>
<span class="t" style="left:1120.3px;top:120px;font-size:12.4px;line-height:14px;color:#262626;letter-spacing:-0.116px;">Number</span>
<svg style="left:1137.5px;top:140px" width="7.6" height="4.8" viewBox="-1 -1 7.6 4.8"><path d="M0 0L2.8 2.8L5.6 0" fill="none" stroke="#2c2c2c" stroke-width="1.3"/></svg>
<svg style="left:1186px;top:88px" width="17" height="15" viewBox="0 0 17 15"><rect x="0.5" y="0.5" width="16" height="14" fill="#f0f0f0" stroke="#333"/><rect x="4.5" y="0.5" width="4" height="4.6" fill="#e0484d"/><rect x="0.5" y="5.1" width="4" height="4.6" fill="#4a8fd4" opacity="0.8"/><rect x="4.5" y="9.8" width="8" height="4.7" fill="#e0484d"/><rect x="0.5" y="0.5" width="4" height="4.6" fill="#e0484d" opacity="0.85"/><path d="M0.5 5.1H16.5M0.5 9.8H16.5M4.5 0.5V14.5M8.5 0.5V14.5M12.5 0.5V14.5" stroke="#333" fill="none" stroke-width="0.9"/></svg>
<span class="t" style="left:1206.5px;top:89px;font-size:12.4px;line-height:14px;color:#262626;letter-spacing:-0.070px;">Conditional Formatting</span>
<svg style="left:1332.7px;top:92.7px" width="7.6" height="4.8" viewBox="-1 -1 7.6 4.8"><path d="M0 0L2.8 2.8L5.6 0" fill="none" stroke="#2c2c2c" stroke-width="1.3"/></svg>
<svg style="left:1186px;top:114px" width="17" height="16" viewBox="0 0 17 16"><rect x="0.5" y="0.5" width="16" height="13" fill="#f0f0f0" stroke="#333"/><rect x="6" y="5" width="10" height="8.5" fill="#8cc0ee"/><path d="M0.5 4.8H16.5M0.5 9.2H16.5M5.8 0.5V13.5M11.2 0.5V13.5" stroke="#333" fill="none" stroke-width="0.9"/><path d="M15.5 4L8 12" stroke="#444" stroke-width="2.2"/><path d="M15.5 4L8 12" stroke="#ddd" stroke-width="0.9"/><path d="M4 14.5C6 15 8.5 13.5 8.5 11.5L6.8 10.5C5.5 11 5.5 13.5 4 14.5Z" fill="#1e6fb8"/></svg>
<span class="t" style="left:1206.5px;top:115px;font-size:12.4px;line-height:14px;color:#262626;transform:scaleX(0.9198);">Format as Table</span>
<svg style="left:1291px;top:118.7px" width="7.6" height="4.8" viewBox="-1 -1 7.6 4.8"><path d="M0 0L2.8 2.8L5.6 0" fill="none" stroke="#2c2c2c" stroke-width="1.3"/></svg>
<svg style="left:1186px;top:140px" width="17" height="16" viewBox="0 0 17 16"><rect x="0.5" y="0.5" width="16" height="13" fill="#f0f0f0" stroke="#333"/><rect x="3" y="3" width="13" height="10" fill="#5b9fe0"/><path d="M0.5 2.8H16.5M2.8 0.5V13.5" stroke="#333" fill="none" stroke-width="0.9" stroke-dasharray="1.5 1"/><path d="M15.5 4L8 12" stroke="#444" stroke-width="2.2"/><path d="M15.5 4L8 12" stroke="#ddd" stroke-width="0.9"/><path d="M4 14.5C6 15 8.5 13.5 8.5 11.5L6.8 10.5C5.5 11 5.5 13.5 4 14.5Z" fill="#1e6fb8"/></svg>
<span class="t" style="left:1206.5px;top:141px;font-size:12.4px;line-height:14px;color:#262626;transform:scaleX(0.8935);">Cell Styles</span>
<svg style="left:1261.8px;top:145px" width="7.6" height="4.8" viewBox="-1 -1 7.6 4.8"><path d="M0 0L2.8 2.8L5.6 0" fill="none" stroke="#2c2c2c" stroke-width="1.3"/></svg>
<span class="t" style="left:1251.6px;top:162px;font-size:12.4px;line-height:14px;color:#262626;transform:scaleX(0.8296);">Styles</span>
<svg style="left:1370px;top:84px" width="30" height="28" viewBox="0 0 30 28"><path d="M7.5 1.5H22.5M7.5 0V3M22.5 0V3" stroke="#1e6fb8" fill="none" stroke-width="1"/><rect x="1.5" y="5.5" width="27" height="21" fill="#ececec" stroke="#444"/><rect x="8.5" y="12.5" width="13" height="7" fill="#5b9fe0"/><path d="M1.5 12.5H28.5M1.5 19.5H28.5M8.5 5.5V26.5M21.5 5.5V26.5" stroke="#444" fill="none" stroke-width="1"/></svg>
<span class="t" style="left:1372.5px;top:120px;font-size:12.4px;line-height:14px;color:#262626;transform:scaleX(0.8712);">Cells</span>
<svg style="left:1380.7px;top:139.5px" width="7.6" height="4.8" viewBox="-1 -1 7.6 4.8"><path d="M0 0L2.8 2.8L5.6 0" fill="none" stroke="#2c2c2c" stroke-width="1.3"/></svg>
<svg style="left:1422px;top:84px" width="34" height="34" viewBox="0 0 34 34"><path d="M14.5 19.5L3.5 30.5" stroke="#555" stroke-width="1.2"/><circle cx="21.5" cy="12.4" r="10" fill="#e2e2e2" stroke="#555" stroke-width="1"/></svg>
<span class="t" style="left:1421.6px;top:120px;font-size:12.4px;line-height:14px;color:#262626;letter-spacing:-0.332px;">Editing</span>
<svg style="left:1435.7px;top:139.5px" width="7.6" height="4.8" viewBox="-1 -1 7.6 4.8"><path d="M0 0L2.8 2.8L5.6 0" fill="none" stroke="#2c2c2c" stroke-width="1.3"/></svg>
<svg style="left:1484px;top:87px" width="30" height="30" viewBox="0 0 30 30"><g fill="none" stroke="#d2491b" stroke-width="1.2"><rect x="1.5" y="1.5" width="27" height="27"/><rect x="5" y="5" width="8.5" height="8.5"/><rect x="16.5" y="5" width="8.5" height="8.5"/><rect x="5" y="16.5" width="8.5" height="8.5"/><rect x="16.5" y="16.5" width="8.5" height="8.5"/></g></svg>
<span class="t" style="left:1478.4px;top:122px;font-size:12.4px;line-height:14px;color:#262626;letter-spacing:-0.069px;">Add-ins</span>
<span class="t" style="left:1479.3px;top:162px;font-size:12.4px;line-height:14px;color:#262626;transform:scaleX(0.9354);">Add-ins</span>
<span class="t" style="left:719px;top:193px;font-size:12.6px;line-height:14px;color:#f0f0f0;transform:scaleX(0.9239);">G21</span>
<svg style="left:794.5px;top:198.5px" width="12" height="7" viewBox="-1 -1 12 7"><path d="M0 0L5.0 5L10 0" fill="none" stroke="#e6e6e6" stroke-width="1.3"/></svg>
<svg style="left:822px;top:192px" width="4" height="16" viewBox="0 0 4 16"><g fill="#cfcfcf"><rect x="1" y="2.700" width="2" height="2"/><rect x="1" y="7" width="2" height="2"/><rect x="1" y="11.300" width="2" height="2"/></g></svg>
<svg style="left:840px;top:193px" width="40" height="14" viewBox="0 0 40 14"><g fill="none" stroke="#8a8a8a" stroke-width="1.1"><path d="M1.5 2L11.5 12M11.5 2L1.5 12"/><path d="M23.5 7.5L27.5 11.5L36.5 2"/></g></svg>
<span class="t" style="left:888.5px;top:190px;font-size:16.5px;line-height:19px;color:#f0f0f0;font-style:italic;font-family:'Liberation Serif',serif;">f</span>
<span class="t" style="left:894.6px;top:193px;font-size:13.5px;line-height:15px;color:#f0f0f0;font-style:italic;font-family:'Liberation Serif',serif;">x</span>
<span class="t" style="left:923.5px;top:193px;font-size:12.6px;line-height:14px;color:#f0f0f0;">1</span>
<svg style="left:17px;top:44px" width="40" height="40" viewBox="0 0 40 40"><rect x="0.3" y="0" width="38.6" height="38.6" rx="1.5" fill="#dadada"/><rect x="0.3" y="0" width="38.6" height="6" rx="1.5" fill="#cfcfcf"/><rect x="1.6" y="6.4" width="10.2" height="7.4" fill="#e9e9e9"/><rect x="13" y="6.4" width="24.6" height="7.4" fill="#e9e9e9"/><rect x="1.6" y="14.8" width="10.2" height="7.2" fill="#e9e9e9"/><rect x="13" y="14.8" width="24.6" height="7.2" fill="#e9e9e9"/><rect x="1.6" y="23" width="10.2" height="7.4" fill="#e9e9e9"/><rect x="13" y="23" width="24.6" height="7.4" fill="#e9e9e9"/><rect x="1.6" y="31.4" width="10.2" height="6" fill="#e9e9e9"/><rect x="13" y="31.4" width="24.6" height="6" fill="#e9e9e9"/><g fill="none" stroke="#0a0a0a" stroke-width="3.3" stroke-linecap="round" stroke-linejoin="round"><path d="M10.2 17.6A10 10 0 0 1 28.6 15.4"/><path d="M31.2 10.4V17.4H24.2"/><path d="M29.8 24.4A10 10 0 0 1 11.4 26.6"/><path d="M8.8 31.6V24.6H15.8"/></g></svg>
<svg style="left:70px;top:45px" width="11" height="9" viewBox="0 0 11 9"><path d="M0.3 0.6H10.1L5.2 8Z" fill="#6d7a86"/></svg>
<svg style="left:145px;top:45px" width="40" height="40" viewBox="0 0 40 40"><rect x="0" y="0" width="18.5" height="38" fill="#d5d5d5"/><rect x="0" y="0" width="18.5" height="5.4" fill="#cdcdcd"/><rect x="1.4" y="5.4" width="15.7" height="7" fill="#ececec"/><rect x="1.4" y="13.6" width="15.7" height="7.2" fill="#ececec"/><rect x="1.4" y="22" width="15.7" height="7.4" fill="#ececec"/><rect x="1.4" y="30.6" width="15.7" height="6.2" fill="#ececec"/><rect x="20" y="0" width="18.6" height="19.8" fill="#d5d5d5"/><rect x="20" y="0" width="18.6" height="2.6" fill="#cdcdcd"/><rect x="21.4" y="2.8" width="15.8" height="8" fill="#ececec"/><rect x="21.4" y="12" width="15.8" height="6.4" fill="#ececec"/><circle cx="29.6" cy="29.6" r="8" fill="#14c514"/><path d="M29.6 24.8V34.4M24.8 29.6H34.4" stroke="#fff" stroke-width="2.6" stroke-linecap="round"/></svg>
<svg style="left:198px;top:45px" width="11" height="9" viewBox="0 0 11 9"><path d="M0.3 0.6H10.1L5.2 8Z" fill="#6d7a86"/></svg>
<svg style="left:259px;top:45px" width="40" height="40" viewBox="0 0 40 40"><rect x="0" y="0" width="18.5" height="38" fill="#d5d5d5"/><rect x="0" y="0" width="18.5" height="5.4" fill="#cdcdcd"/><rect x="1.4" y="5.4" width="15.7" height="7" fill="#ececec"/><rect x="1.4" y="13.6" width="15.7" height="7.2" fill="#ececec"/><rect x="1.4" y="22" width="15.7" height="7.4" fill="#ececec"/><rect x="1.4" y="30.6" width="15.7" height="6.2" fill="#ececec"/><rect x="20" y="0" width="18.6" height="19.8" fill="#d5d5d5"/><rect x="20" y="0" width="18.6" height="2.6" fill="#cdcdcd"/><rect x="21.4" y="2.8" width="15.8" height="8" fill="#ececec"/><rect x="21.4" y="12" width="15.8" height="6.4" fill="#ececec"/><circle cx="29" cy="29.6" r="8" fill="#d60000"/><path d="M24.6 29.6H33.4" stroke="#fff" stroke-width="2.7" stroke-linecap="butt"/></svg>
<svg style="left:312px;top:45px" width="11" height="9" viewBox="0 0 11 9"><path d="M0.3 0.6H10.1L5.2 8Z" fill="#6d7a86"/></svg>
<svg style="left:354px;top:44px" width="44" height="38" viewBox="354 44 44 38"><path d="M375.1 77.2H382A10.15 10.15 0 0 0 382 56.9H367.5" fill="none" stroke="#7b7b7b" stroke-width="4.9"/><path d="M356.3 56.9L368.1 47.3V66.5Z" fill="#7b7b7b"/></svg>
<svg style="left:430px;top:44px" width="44" height="38" viewBox="430 44 44 38"><path d="M453 77.2H446A10.15 10.15 0 0 1 446 56.9H460.5" fill="none" stroke="#7b7b7b" stroke-width="4.9"/><path d="M471.7 56.9L460 47.3V66.5Z" fill="#7b7b7b"/></svg>
<svg style="left:648.9px;top:60.2px" width="36" height="36" viewBox="-18 -18 36 36"><g fill="#1b9fe0"><rect x="-2.45" y="-16" width="4.9" height="7.4" rx="0.8" transform="rotate(0.0)"/><rect x="-2.45" y="-16" width="4.9" height="7.4" rx="0.8" transform="rotate(45.0)"/><rect x="-2.45" y="-16" width="4.9" height="7.4" rx="0.8" transform="rotate(90.0)"/><rect x="-2.45" y="-16" width="4.9" height="7.4" rx="0.8" transform="rotate(135.0)"/><rect x="-2.45" y="-16" width="4.9" height="7.4" rx="0.8" transform="rotate(180.0)"/><rect x="-2.45" y="-16" width="4.9" height="7.4" rx="0.8" transform="rotate(225.0)"/><rect x="-2.45" y="-16" width="4.9" height="7.4" rx="0.8" transform="rotate(270.0)"/><rect x="-2.45" y="-16" width="4.9" height="7.4" rx="0.8" transform="rotate(315.0)"/></g><circle r="11.6" fill="#1b9fe0"/><circle r="5.9" fill="#ececec"/></svg>
<svg style="left:122.6px;top:130.2px" width="28" height="28" viewBox="-14 -14 28 28"><circle cx="-5.8" cy="4.6" r="6.4" fill="#8c8c8c"/><circle cx="6" cy="4.4" r="6.4" fill="#4fb0e2"/><circle cx="0" cy="-5.4" r="6.7" fill="#f98e0a"/></svg>
<svg style="left:495px;top:130.2px" width="28" height="28" viewBox="-14 -14 28 28"><circle cx="-5.8" cy="4.6" r="6.4" fill="#8c8c8c"/><circle cx="6" cy="4.4" r="6.4" fill="#4fb0e2"/><circle cx="0" cy="-5.4" r="6.7" fill="#f98e0a"/></svg>
<svg style="left:320px;top:129px" width="30" height="30" viewBox="320 129 30 30"><path d="M329.4 131.5L347.8 150.6L341.5 156.6L322.6 137.4Z" fill="#f98e0a"/><g stroke="#ffc77a" stroke-width="0.6" fill="none" opacity="0.75"><path d="M327.2 133.4L345.7 152.6"/><path d="M325 135.4L343.6 154.6"/><path d="M324.6 139.5L331.4 133.6"/><path d="M327.7 142.7L334.5 136.8"/><path d="M330.8 145.9L337.6 140.0"/><path d="M333.9 149.1L340.7 143.2"/><path d="M337.0 152.3L343.8 146.4"/><path d="M340.1 155.5L346.9 149.6"/></g></svg>
</body></html>
